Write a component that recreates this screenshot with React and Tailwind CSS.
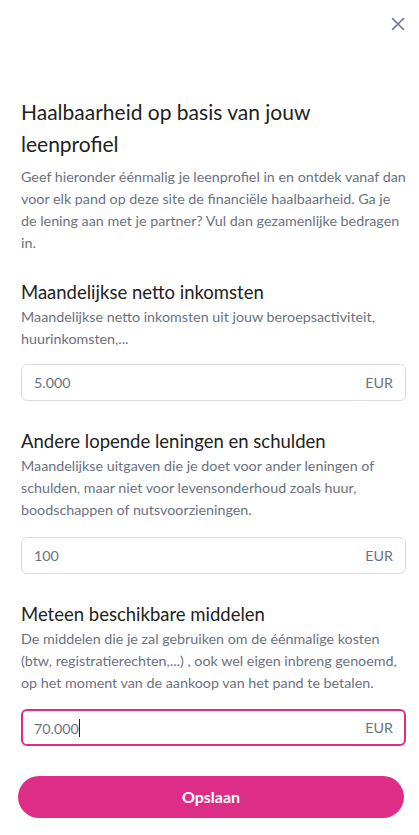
import React from "react";

function Field({ title, desc, value, focused, gap }) {
  return (
    <div className="mt-[28px] first:mt-0">
      <h3 className="text-[18.5px] leading-[24px] text-[#222222]">{title}</h3>
      <p className="mt-[2px] text-[14.3px] leading-[22px] text-[#6b7280]">{desc}</p>
      <div
        className={
          "flex h-[37px] items-center justify-between rounded-[6px] bg-white " +
          gap +
          " " +
          (focused ? "border-2 border-[#de2d87] px-[11px]" : "border border-[#d9dce1] px-[12px]")
        }
      >
        <span className="text-[14.3px] text-[#6b7280]">
          {value}
          {focused && <span className="inline-block h-[18px] w-px translate-y-[3px] bg-[#222]" />}
        </span>
        <span className="text-[14.3px] text-[#6b7280]">EUR</span>
      </div>
    </div>
  );
}

export default function App() {
  return (
    <div
      className="min-h-[835px] w-[419px] bg-white"
      style={{ fontFamily: "Lato, 'Noto Sans', sans-serif" }}
    >
      <div className="flex justify-end pr-[14px] pt-[17px]">
        <svg width="14" height="14" viewBox="0 0 14 14" className="text-[#6b7280]">
          <path d="M1.5 1.5 L12.5 12.5 M12.5 1.5 L1.5 12.5" stroke="currentColor" strokeWidth="1.6" strokeLinecap="round" />
        </svg>
      </div>
      <div className="pl-[21px] pr-[13px] pt-[65px]">
        <h2 className="text-[21px] leading-[32px] text-[#222222]">
          Haalbaarheid op basis van jouw leenprofiel
        </h2>
        <p className="mt-[6px] text-[14.3px] leading-[22px] text-[#6b7280]">
          Geef hieronder éénmalig je leenprofiel in en ontdek vanaf dan voor elk pand op deze site de
          financiële haalbaarheid. Ga je de lening aan met je partner? Vul dan gezamenlijke bedragen in.
        </p>
      </div>
      <div className="mt-[26px] pl-[21px] pr-[13px]">
        <Field
          title="Maandelijkse netto inkomsten"
          desc="Maandelijkse netto inkomsten uit jouw beroepsactiviteit, huurinkomsten,..."
          value="5.000"
          gap="mt-[14px]"
        />
        <Field
          title="Andere lopende leningen en schulden"
          desc="Maandelijkse uitgaven die je doet voor ander leningen of schulden, maar niet voor levensonderhoud zoals huur, boodschappen of nutsvoorzieningen."
          value="100"
          gap="mt-[16px]"
        />
        <Field
          title="Meteen beschikbare middelen"
          desc="De middelen die je zal gebruiken om de éénmalige kosten (btw, registratierechten,...) , ook wel eigen inbreng genoemd, op het moment van de aankoop van het pand te betalen."
          value="70.000"
          gap="mt-[15px]"
          focused
        />
      </div>
      <div className="mt-[30px] pl-[18px] pr-[15px]">
        <button className="flex h-[42px] w-full items-center justify-center rounded-full bg-[#de2d87] text-[16px] font-bold text-white">
          Opslaan
        </button>
      </div>
    </div>
  );
}
